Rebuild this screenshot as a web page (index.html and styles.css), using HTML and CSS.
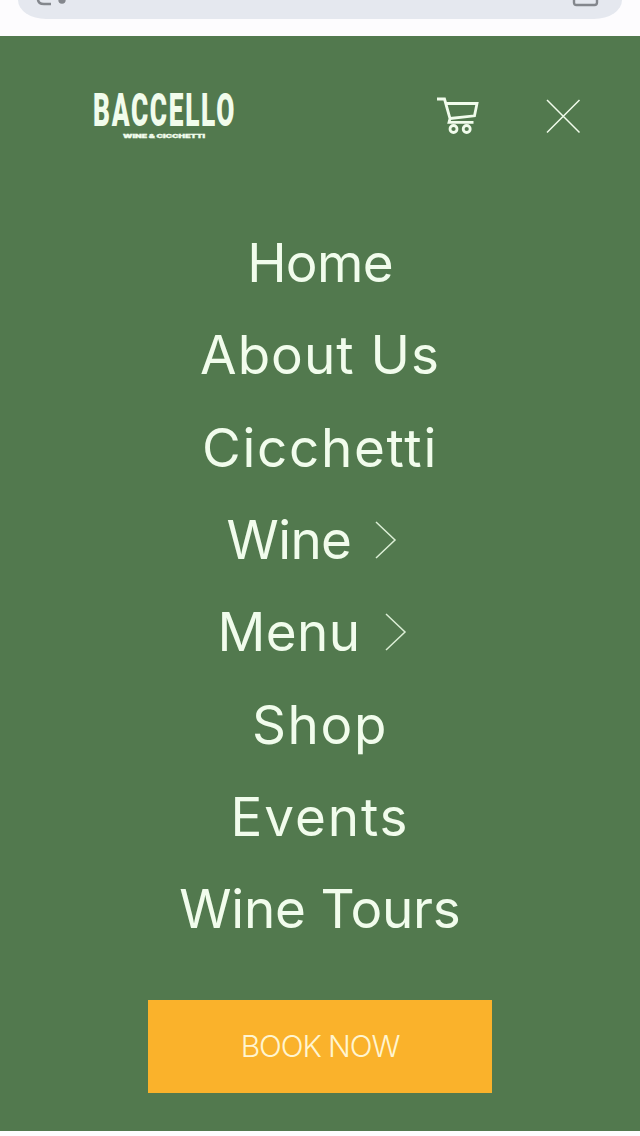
FILE: index.html
```
<!DOCTYPE html>
<html lang="en">
<head>
    <meta charset="UTF-8">
    <meta name="viewport" content="width=device-width, initial-scale=1.0">
    <title>Baccello</title>
    <link rel="stylesheet" href="styles.css">
</head>
<body>

<div class="browser-bar">
    <div class="address">
        <svg width="34" height="10" viewBox="0 0 34 10">
            <path d="M2 -4V-1Q2 4 8 4H15" fill="none" stroke="#84878d" stroke-width="2.6"/>
            <circle cx="26" cy="0" r="3.7" fill="#84878d"/>
        </svg>
        <svg width="28" height="10" viewBox="0 0 28 10">
            <path d="M2 -4V2.5Q2 5 4.5 5H22.5Q25 5 25 2.5V-4" fill="none" stroke="#84878d" stroke-width="2.4"/>
        </svg>
    </div>
</div>

<div class="menu">
    <header>
        <a class="logo" href="#">
            <svg width="156" height="64" viewBox="0 0 156 64">
                <text class="logo-name" x="0" y="41.5" textLength="143" lengthAdjust="spacingAndGlyphs">BACCELLO</text>
                <text class="logo-sub" x="30" y="54" textLength="82" lengthAdjust="spacingAndGlyphs">WINE &amp; CICCHETTI</text>
            </svg>
        </a>
        <svg class="cart" width="44" height="40" viewBox="0 0 44 40" fill="none" stroke="#f1fcec" stroke-width="2.8">
            <path d="M1 3H8.5L14 22.5L13 26.3H37.5"/>
            <path d="M10 7.5H41L38.5 19.8L14 22.5"/>
            <circle cx="17.5" cy="33" r="3.5"/>
            <circle cx="30.7" cy="33" r="3.5"/>
        </svg>
        <svg class="close" width="36" height="36" viewBox="0 0 36 36" fill="none" stroke="#f1fcec" stroke-width="1.5">
            <path d="M2 2L34.5 34.5M34.5 2L2 34.5"/>
        </svg>
    </header>

    <nav>
        <a class="home" href="#">Home</a>
        <a class="about" href="#">About Us</a>
        <a class="cicchetti" href="#">Cicchetti</a>
        <a class="wine" href="#">Wine
            <svg class="chevron" width="22" height="38" viewBox="0 0 22 38"><path d="M1 1L20 19L1 37"/></svg>
        </a>
        <a class="food" href="#">Menu
            <svg class="chevron" width="22" height="38" viewBox="0 0 22 38"><path d="M1 1L20 19L1 37"/></svg>
        </a>
        <a class="shop" href="#">Shop</a>
        <a class="events" href="#">Events</a>
        <a class="tours" href="#">Wine Tours</a>
    </nav>

    <a class="book" href="#">BOOK NOW</a>
</div>

</body>
</html>
```

FILE: styles.css
```
* {
    box-sizing: border-box;
}

body {
    margin: 0;
    background-color: #fdfcfe;
    font-family: Inter, 'Liberation Sans', sans-serif;
}

a {
    color: #f1fcec;
    text-decoration: none;
}

svg {
    display: block;
}

.browser-bar {
    height: 36px;
    padding: 0 18px;
}

.address {
    display: flex;
    justify-content: space-between;
    height: 19px;
    padding: 0 22px 0 18px;
    background-color: #e5e8ef;
    border-radius: 0 0 28px 28px / 0 0 19px 19px;
}

.menu {
    display: flex;
    flex-direction: column;
    align-items: center;
    height: 1095px;
    background-color: #52794e;
}

header {
    display: flex;
    align-items: center;
    width: 100%;
    height: 160px;
    padding: 0 59px 0 93px;
}

.logo-name {
    font-family: Roboto, sans-serif;
    font-size: 45.5px;
    font-weight: 900;
    letter-spacing: 3px;
    fill: #f1fcec;
}

.logo-sub {
    font-size: 5px;
    font-weight: 900;
    fill: #f1fcec;
    stroke: #f1fcec;
    stroke-width: 0.3px;
}

.cart {
    margin-left: auto;
    margin-right: 65px;
}

nav {
    display: flex;
    flex-direction: column;
    align-items: center;
    margin-top: 21px;
}

nav a {
    display: flex;
    align-items: center;
    height: 92.3px;
    font-size: 53px;
    font-weight: 400;
    white-space: nowrap;
}

.home {
    letter-spacing: -0.7px;
}

.about {
    letter-spacing: 1px;
}

.cicchetti {
    letter-spacing: 1.7px;
}

.wine {
    letter-spacing: -0.6px;
}

.food {
    letter-spacing: 0.4px;
}

.shop {
    letter-spacing: 1.6px;
}

.events {
    letter-spacing: 1.9px;
}

.tours {
    letter-spacing: -0.2px;
}

.chevron {
    margin-left: 24px;
    margin-right: 16px;
    fill: none;
    stroke: #dcefd6;
    stroke-width: 1.5;
}

.book {
    display: flex;
    justify-content: center;
    align-items: center;
    width: 344px;
    height: 93px;
    margin-top: 45px;
    padding-bottom: 2px;
    background-color: #fab22b;
    color: #fff5d0;
    font-size: 30px;
    font-weight: 300;
    letter-spacing: -1.1px;
}
```
